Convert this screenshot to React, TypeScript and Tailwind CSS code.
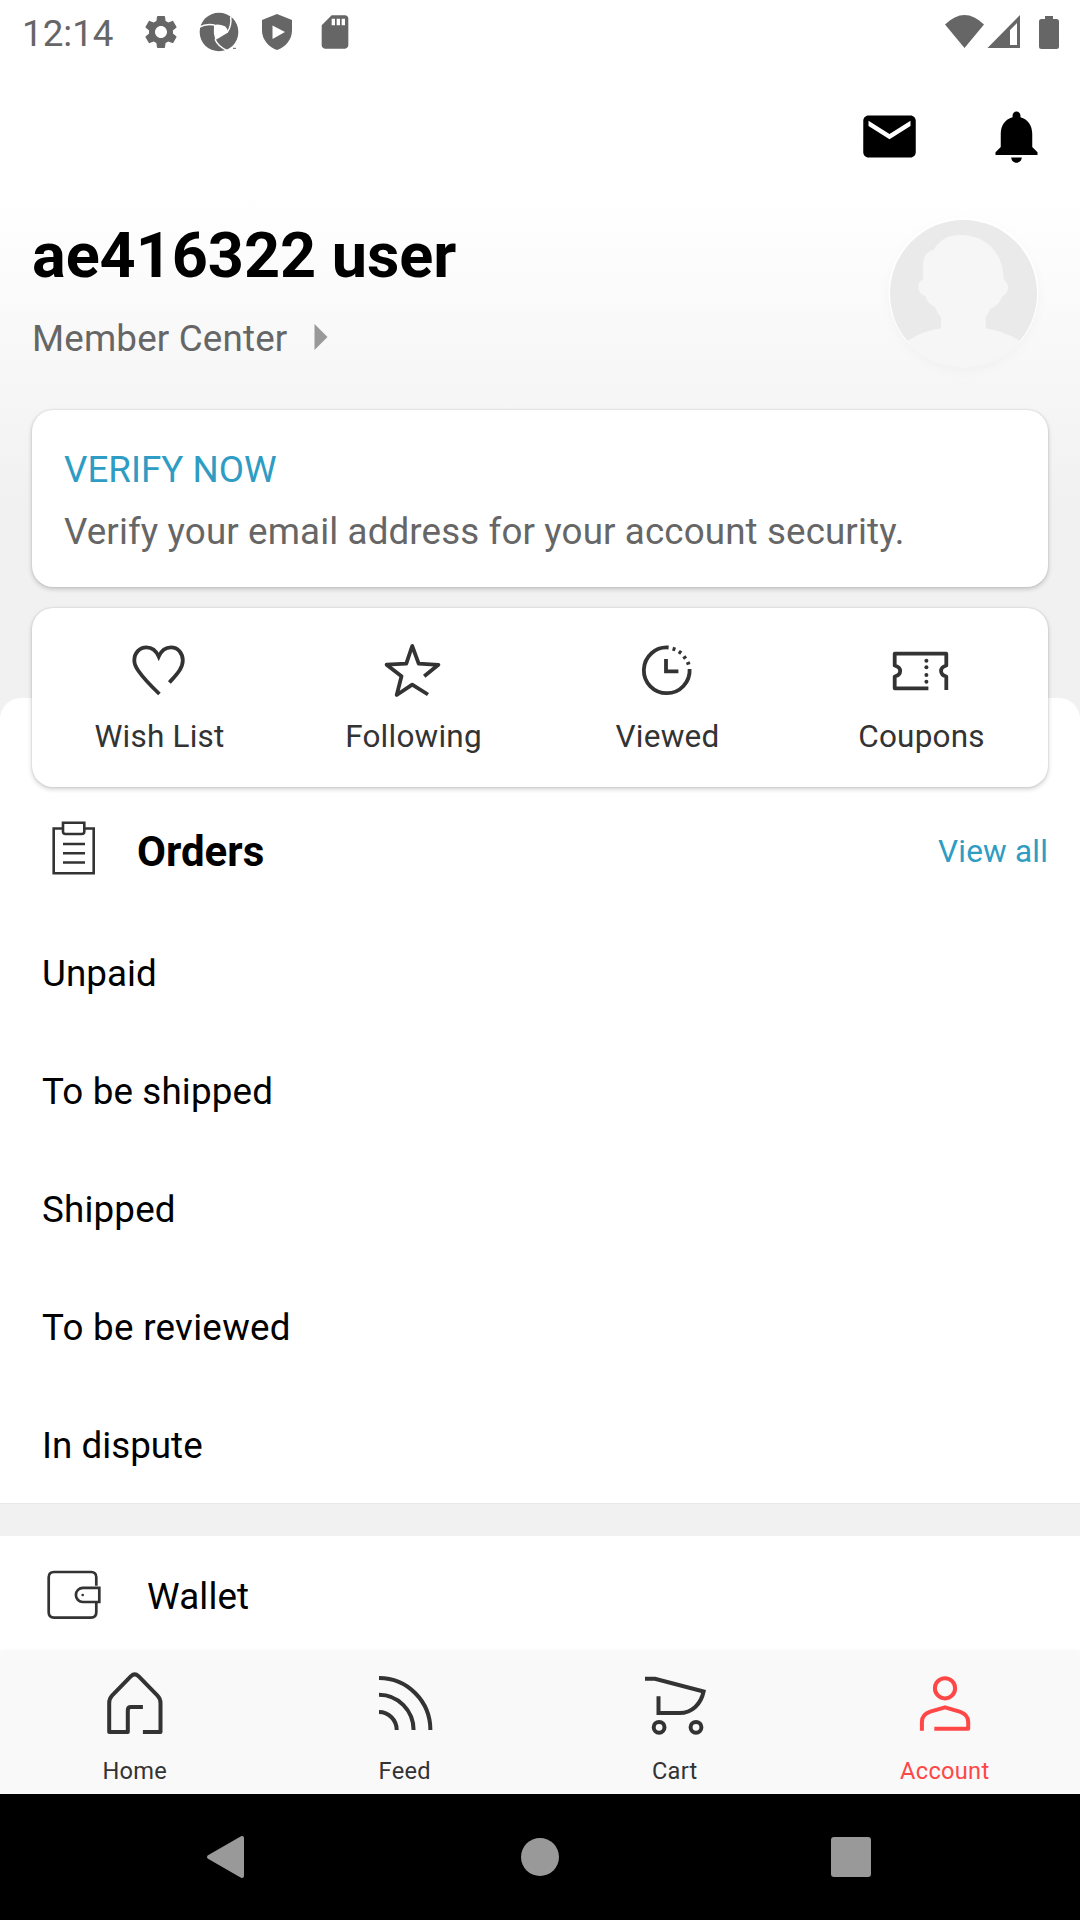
import React from 'react';

const orderStates = [
  { label: 'Unpaid', tracking: 'tracking-[0.05px]' },
  { label: 'To be shipped', tracking: 'tracking-[0.15px]' },
  { label: 'Shipped', tracking: 'tracking-[0.18px]' },
  { label: 'To be reviewed', tracking: 'tracking-[0.28px]' },
  { label: 'In dispute', tracking: 'tracking-[0.02px]' },
];

function StatusBar() {
  return (
    <div className="flex h-[63px] shrink-0 items-center justify-between text-[#666]">
      <div className="flex items-center pl-[22px]">
        <span className="w-[119px] text-[36.75px] leading-[44px] pt-[4px]">12:14</span>
        <svg className="mr-[18px] size-[40px]" viewBox="0 0 24 24" fill="currentColor">
          <path d="M19.14 12.94c.04-.3.06-.61.06-.94 0-.32-.02-.64-.07-.94l2.03-1.58c.18-.14.23-.41.12-.61l-1.92-3.32c-.12-.22-.37-.29-.59-.22l-2.39.96c-.5-.38-1.03-.7-1.62-.94l-.36-2.54c-.04-.24-.24-.41-.48-.41h-3.84c-.24 0-.43.17-.47.41l-.36 2.54c-.59.24-1.13.57-1.62.94l-2.39-.96c-.22-.08-.47 0-.59.22L2.74 8.87c-.12.21-.08.47.12.61l2.03 1.58c-.05.3-.09.63-.09.94s.02.64.07.94l-2.03 1.58c-.18.14-.23.41-.12.61l1.92 3.32c.12.22.37.29.59.22l2.39-.96c.5.38 1.03.7 1.62.94l.36 2.54c.05.24.24.41.48.41h3.84c.24 0 .44-.17.47-.41l.36-2.54c.59-.24 1.13-.56 1.62-.94l2.39.96c.22.08.47 0 .59-.22l1.92-3.32c.12-.22.07-.47-.12-.61l-2.01-1.58zM12 15.6c-1.98 0-3.6-1.62-3.6-3.6s1.62-3.6 3.6-3.6 3.6 1.62 3.6 3.6-1.62 3.6-3.6 3.6z" />
        </svg>
        <svg className="mr-[18px] size-[40px]" viewBox="0 0 120 120">
          <circle cx="60" cy="60" r="58" fill="currentColor" />
          <path d="M45 39Q60 35 78 43Q89 54 86 62Q72 70 49 84Q42 62 45 39Z" fill="#fff" />
          <path d="M0 46Q20 34 47 39" fill="none" stroke="#fff" strokeWidth="4.500" />
          <path d="M95 14Q99 42 84 62" fill="none" stroke="#fff" strokeWidth="4.500" />
          <path d="M48 82Q57 104 84 115" fill="none" stroke="#fff" strokeWidth="4.500" />
          <path d="M84 116L98 104L104 120H84Z" fill="#fff" />
          <path d="M102 109h9" stroke="currentColor" strokeWidth="3" />
        </svg>
        <svg className="mr-[18px] size-[40px]" viewBox="0 0 40 40">
          <path d="M20 2L5 8V18.500C5 27.500 11.500 35 20 38C28.500 35 35 27.500 35 18.500V8Z" fill="currentColor" />
          <path d="M15.500 13.500V27L28 20Z" fill="#fff" />
        </svg>
        <svg className="size-[40px]" viewBox="0 0 24 24" fill="currentColor">
          <path d="M18 2h-8L4.020 8 4 20c0 1.100.9 2 2 2h12c1.100 0 2-.9 2-2V4c0-1.100-.9-2-2-2zm-6 6h-2V4h2v4zm3 0h-2V4h2v4zm3 0h-2V4h2v4z" />
        </svg>
      </div>
      <svg className="mr-[20px] h-[40px] w-[120px]" viewBox="0 0 120 40" fill="currentColor">
        <path d="M5 12.500Q24.500 -6.500 44 12.500L24.500 36Z" />
        <path d="M80 3V36H47.500ZM77 11L70 18V33H77Z" fillRule="evenodd" />
        <path d="M105 4V7H101.500Q99 7 99 9.500V34.500Q99 37 101.500 37H116.500Q119 37 119 34.500V9.500Q119 7 116.500 7H113V4Z" />
      </svg>
    </div>
  );
}

function Toolbar() {
  return (
    <div className="flex h-[147px] shrink-0 items-start justify-end gap-[64px] pr-[32px] pt-[42px]">
      <svg className="size-[63px]" viewBox="0 0 24 24">
        <path d="M20 4H4c-1.100 0-1.990.9-1.990 2L2 18c0 1.100.9 2 2 2h16c1.100 0 2-.9 2-2V6c0-1.100-.9-2-2-2zm0 4l-8 5-8-5V6l8 5 8-5v2z" />
      </svg>
      <svg className="size-[63px]" viewBox="0 0 24 24">
        <path d="M12 22c1.100 0 2-.9 2-2h-4c0 1.100.89 2 2 2zm6-6v-5c0-3.070-1.640-5.640-4.500-6.320V4c0-.83-.67-1.500-1.500-1.500s-1.500.67-1.500 1.500v.68C7.630 5.360 6 7.920 6 11v5l-2 2v1h16v-1l-2-2z" />
      </svg>
    </div>
  );
}

function Avatar() {
  return (
    <div className="mr-[11px] mt-[10px] size-[147px] rounded-full shadow-[0_-1px_0_1.5px_rgba(255,255,255,0.9),0_3px_14px_rgba(0,0,0,0.035)]">
      <svg className="size-[147px] rounded-full" viewBox="90 59 441 441">
        <rect x="90" y="59" width="441" height="441" fill="#eaeaea" />
        <path
          d="M90 470L143 421Q190 392 243 384V351Q232 338 224 319Q200 310 197 288Q175 281 175 261Q175 243 189 236V195Q190 154 221 149Q245 104 302 104C380 104 431 160 431 238Q444 247 444 261Q444 280 427 288Q417 317 391 325Q386 338 377 350V384Q430 392 479 421L531 470V510H90Z"
          fill="#f6f6f6"
        />
      </svg>
    </div>
  );
}

function Profile() {
  return (
    <div className="flex h-[200px] shrink-0 justify-between px-[32px]">
      <div className="pt-[9px]">
        <h1 className="text-[63px] font-bold leading-[74px] tracking-[-0.06px]">ae416322 user</h1>
        <div className="mt-[24px] flex items-center text-[36.75px] leading-[44px] tracking-[0.18px] text-[#666]">
          Member Center
          <svg className="-mt-[4px] ml-[26px] h-[27px] w-[14px]" viewBox="0 0 14 27" fill="#999">
            <path d="M0.500 0L13.500 13L0.500 26Z" />
          </svg>
        </div>
      </div>
      <Avatar />
    </div>
  );
}

const shortcuts = [
  {
    label: 'Wish List',
    icon: <path d="M30.400 54C21 45 14 37.500 9.500 31C7 27.500 5.300 24 5.300 20.500C5.300 13 10.500 7.400 17.500 7.400C23 7.400 27 10.500 29.700 16.500C32.400 10.500 36.500 7.400 42 7.400C49 7.400 53.800 13 53.800 20.500C53.800 28.500 47 35 40.400 42.500" />,
  },
  {
    label: 'Following',
    icon: <path strokeLinejoin="round" d="M41.200 36.300L55.400 24.800L35.700 23.700L29.200 6L23.300 23.700L3.600 24.700L18.500 36.300L13.700 55L29.200 44.700L45 54.500" />,
  },
  {
    label: 'Viewed',
    icon: (
      <>
        <path d="M31.600 7.500A22.900 22.900 0 1 0 52.600 29" />
        <path d="M29 19V31.300H41.400" />
        <path d="M35.600 8.600L38.400 9.500M41.800 11.500L44.200 13.100M46.800 16.300L48.600 18.600M50.700 22L51.700 24.600" />
      </>
    ),
  },
  {
    label: 'Coupons',
    icon: (
      <>
        <path strokeLinejoin="round" d="M37.400 48.300H3.700V36.500C11 34.500 11 27.500 3.700 25.500V13.700H55.300V25.500C48.300 27.500 48.300 34.500 55.300 36.500V50" />
        <g fill="#333" stroke="none">
          <circle cx="35.400" cy="20.700" r="2" />
          <circle cx="35.400" cy="27.300" r="2" />
          <circle cx="35.400" cy="35" r="2" />
          <circle cx="35.400" cy="41.700" r="2" />
        </g>
      </>
    ),
  },
];

const tabs = [
  {
    label: 'Home',
    color: 'text-[#333]',
    icon: <path strokeLinejoin="round" d="M47.900 69H65.500V40.200Q65.500 35.700 62.500 32.700L43.500 13.200Q39.700 9.700 36 13.200L17 32.700Q14.200 35.700 14.200 40.200V69H32.800V47.200Q32.800 44 36 44H47.900" />,
  },
  {
    label: 'Feed',
    color: 'text-[#333]',
    icon: <path d="M14 15A51.400 52 0 0 1 65.400 67M14 31.700A34.600 35.300 0 0 1 48.600 67M14 49A17.700 18 0 0 1 31.700 67" />,
  },
  {
    label: 'Cart',
    color: 'text-[#333]',
    icon: (
      <>
        <path d="M10 15.700H20L68.600 28.500C66 41 57 50 44.500 50H23.500V33.300" />
        <circle cx="24.100" cy="64.300" r="5.400" />
        <circle cx="61" cy="64.300" r="5.400" />
      </>
    ),
  },
  {
    label: 'Account',
    color: 'text-[#ff4747]',
    icon: (
      <>
        <circle cx="40" cy="25.300" r="10.100" />
        <path strokeLinejoin="round" d="M16.900 67.700V59Q16.900 51.500 25.200 48.700L40 44.300L54.600 48.700Q63.200 51.500 63.200 59V65.700H29.300" />
      </>
    ),
  },
];

const cardShadow = 'shadow-[0_2px_5px_rgba(0,0,0,0.2),0_0_2px_rgba(0,0,0,0.14)]';

export default function App() {
  return (
    <div className="flex h-[1920px] w-[1080px] flex-col overflow-hidden bg-white font-[Roboto,sans-serif] text-black">
      <div className="flex h-[719px] shrink-0 flex-col bg-[linear-gradient(to_bottom,#fff_195px,#f1f1f1_504px)]">
        <StatusBar />
        <Toolbar />
        <Profile />
        <div className={`mx-[32px] flex h-[177px] shrink-0 flex-col rounded-[21px] bg-white px-[32px] pt-[38px] text-[36.75px] leading-[44px] ${cardShadow}`}>
          <span className="text-[#2e9cc3]">VERIFY NOW</span>
          <span className="mt-[18px] tracking-[0.12px] text-[#666]">Verify your email address for your account security.</span>
        </div>
      </div>

      <div className="relative -mt-[21px] flex h-[954px] shrink-0 flex-col rounded-t-[21px] bg-white">
        <div className={`mx-[32px] -mt-[90px] grid h-[179px] shrink-0 grid-cols-4 rounded-[21px] bg-white ${cardShadow}`}>
          {shortcuts.map((s) => (
            <div key={s.label} className="flex flex-col items-center pt-[32px]">
              <svg className="size-[60px]" viewBox="0 0 60 60" fill="none" stroke="#333" strokeWidth="3.800">
                {s.icon}
              </svg>
              <span className="mt-[18px] pl-[1px] text-[31.5px] leading-[38px] tracking-[0.22px] text-[#333]">{s.label}</span>
            </div>
          ))}
        </div>

        <div className="flex h-[127px] shrink-0 items-center pl-[47px] pr-[32px]">
          <svg className="-mt-[6px] h-[66px] w-[54px]" viewBox="0 0 54 66" fill="none" stroke="#333" strokeWidth="2.600">
            <path d="M16 13.500H6.700V58.300H46.700V13.500H37.300" />
            <path d="M16 7.700H37.300V16.500Q37.300 19 34.800 19H18.500Q16 19 16 16.500Z" />
            <path d="M16 29H38M16 38.300H38M16 47.500H38" />
          </svg>
          <span className="ml-[36px] grow pt-[3px] text-[42px] font-bold leading-[50px]">Orders</span>
          <span className="pt-[2px] text-[31.5px] leading-[38px] tracking-[0.2px] text-[#2e9cc3]">View all</span>
        </div>

        <ul className="flex h-[589px] shrink-0 flex-col pt-[1px] text-[36.75px]">
          {orderStates.map((o) => (
            <li key={o.label} className={`flex h-[118px] shrink-0 items-center pl-[42px] leading-[44px] ${o.tracking}`}>
              {o.label}
            </li>
          ))}
        </ul>
        <div className="relative h-[33px] shrink-0 border-t border-[#e8e8e8] bg-[#f1f1f1]" />
        <div className="flex grow items-center pl-[42px]">
          <svg className="mt-[2px] h-[60px] w-[64px]" viewBox="0 0 64 60" fill="none" stroke="#333" strokeWidth="2.700">
            <path d="M54.300 20.800V12.300Q54.300 7 49 7H12Q6.700 7 6.700 12.300V47.300Q6.700 52.600 12 52.600H49Q54.300 52.600 54.300 47.300V37" />
            <path d="M57.300 22.800V37H41A7.100 7.100 0 0 1 41 22.800Z" />
            <circle cx="40.700" cy="30" r="1.300" fill="#333" stroke="none" />
          </svg>
          <span className="ml-[41px] pt-[5px] text-[36.75px] leading-[44px] tracking-[0.15px]">Wallet</span>
        </div>
      </div>

      <nav className="relative grid h-[142px] shrink-0 grid-cols-4 bg-[#f9f9f9] shadow-[0_-1px_4px_rgba(0,0,0,0.05)]">
        {tabs.map((t) => (
          <div key={t.label} className={`flex flex-col items-center pt-[11px] ${t.color}`}>
            <svg className="size-[80px]" viewBox="0 0 80 80" fill="none" stroke="currentColor" strokeWidth="4">
              {t.icon}
            </svg>
            <span className="mt-[14px] pr-[0.5px] text-[23.6px] leading-[28px] tracking-[0.3px]">{t.label}</span>
          </div>
        ))}
      </nav>

      <div className="flex h-[126px] shrink-0 items-center bg-black pl-[206px]">
        <svg className="h-[44px] w-[40px]" viewBox="0 0 40 44" fill="#999" stroke="#999" strokeWidth="4" strokeLinejoin="round">
          <path d="M3 22L36 3V41Z" />
        </svg>
        <div className="ml-[275px] size-[38px] rounded-full bg-[#999]" />
        <div className="ml-[272px] size-[40px] rounded-[3px] bg-[#999]" />
      </div>
    </div>
  );
}
